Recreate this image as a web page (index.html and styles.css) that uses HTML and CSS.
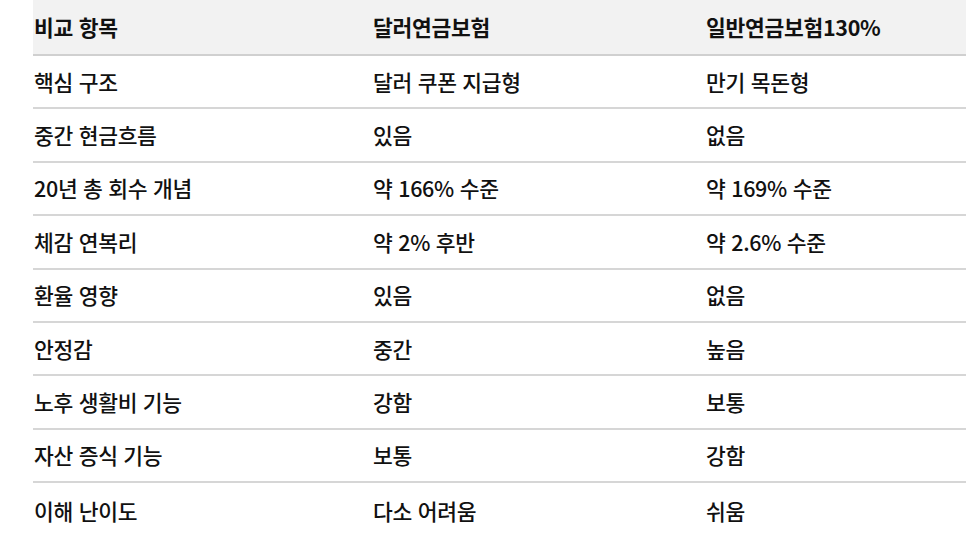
FILE: index.html
```html
<!DOCTYPE html>
<html lang="ko">
<head>
<meta charset="utf-8">
<link rel="stylesheet" href="styles.css">
</head>
<body>
<table class="compare">
  <colgroup>
    <col class="c1"><col class="c2"><col class="c3">
  </colgroup>
  <thead>
    <tr><th>비교 항목</th><th>달러연금보험</th><th>일반연금보험130%</th></tr>
  </thead>
  <tbody>
    <tr><td>핵심 구조</td><td>달러 쿠폰 지급형</td><td>만기 목돈형</td></tr>
    <tr><td>중간 현금흐름</td><td>있음</td><td>없음</td></tr>
    <tr><td>20년 총 회수 개념</td><td>약 166% 수준</td><td>약 169% 수준</td></tr>
    <tr><td>체감 연복리</td><td>약 2% 후반</td><td>약 2.6% 수준</td></tr>
    <tr><td>환율 영향</td><td>있음</td><td>없음</td></tr>
    <tr><td>안정감</td><td>중간</td><td>높음</td></tr>
    <tr><td>노후 생활비 기능</td><td>강함</td><td>보통</td></tr>
    <tr><td>자산 증식 기능</td><td>보통</td><td>강함</td></tr>
    <tr><td>이해 난이도</td><td>다소 어려움</td><td>쉬움</td></tr>
  </tbody>
</table>
</body>
</html>
```

FILE: styles.css
```css
html, body {
  margin: 0;
  padding: 0;
  background: #ffffff;
  overflow: hidden;
}
body {
  font-family: "Noto Sans CJK KR", "Noto Sans", sans-serif;
  color: #111111;
  padding-left: 33px;
}
.compare {
  border-collapse: collapse;
  width: 933px;
  table-layout: fixed;
}
.c1 { width: 339px; }
.c2 { width: 333px; }
.c3 { width: 261px; }
.compare th,
.compare td {
  text-align: left;
  padding: 0 0 0 1px;
  font-size: 21.5px;
  line-height: 26px;
  letter-spacing: -0.3px;
  white-space: nowrap;
  overflow: hidden;
}
.compare thead th {
  background: #f2f2f2;
  font-weight: 700;
  height: 55px;
  border-bottom: 2px solid #d0d0d0;
  box-sizing: border-box;
  vertical-align: middle;
}
.compare tbody td {
  font-weight: 500;
  height: 53.4px;
  border-bottom: 2px solid #d6d6d6;
  box-sizing: border-box;
  vertical-align: middle;
}
.compare tbody tr:last-child td {
  border-bottom: none;
  height: 56px;
}
```
